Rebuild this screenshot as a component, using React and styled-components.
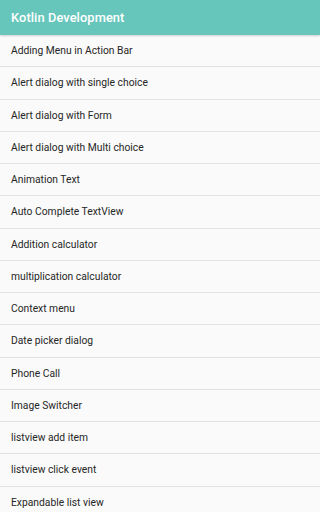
import styled, { createGlobalStyle } from "styled-components";

const items = [
  "Adding Menu in Action Bar",
  "Alert dialog with single choice",
  "Alert dialog with Form",
  "Alert dialog with Multi choice",
  "Animation Text",
  "Auto Complete TextView",
  "Addition calculator",
  "multiplication calculator",
  "Context menu",
  "Date picker dialog",
  "Phone Call",
  "Image Switcher",
  "listview add item",
  "listview click event",
  "Expandable list view",
];

const GlobalStyle = createGlobalStyle`
  html, body {
    margin: 0;
    padding: 0;
    background: #fafafa;
    font-family: Roboto, "Noto Sans", sans-serif;
  }
`;

function App() {
  return (
    <Screen>
      <GlobalStyle />
      <AppBar>
        <Title>Kotlin Development</Title>
      </AppBar>
      <List>
        {items.map((item, index) => (
          <Row key={index}>{item}</Row>
        ))}
      </List>
    </Screen>
  );
}

const Screen = styled.div`
  width: 100%;
  height: 100vh;
  overflow: hidden;
  background: #fafafa;
  display: flex;
  flex-direction: column;
`;

const AppBar = styled.header`
  height: 35px;
  flex-shrink: 0;
  background: #67c6bb;
  display: flex;
  align-items: center;
  padding-left: 11px;
  box-shadow: 0 1px 2px rgba(0, 0, 0, 0.18);
  position: relative;
  z-index: 1;
`;

const Title = styled.h1`
  margin: 0;
  font-size: 12.8px;
  font-weight: 500;
  color: #ffffff;
  letter-spacing: 0.1px;
`;

const List = styled.ul`
  list-style: none;
  margin: 0;
  padding: 0;
`;

const Row = styled.li`
  box-sizing: border-box;
  height: 32.25px;
  display: flex;
  align-items: center;
  padding-left: 11px;
  font-size: 10.3px;
  color: #262626;
  border-bottom: 1px solid #e2e2e2;
`;

export default App;
